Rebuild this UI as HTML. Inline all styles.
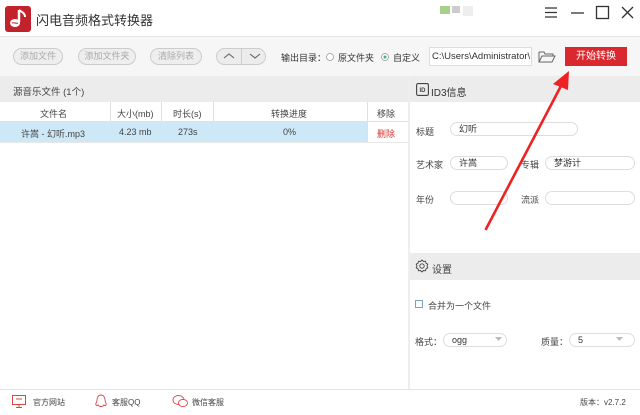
<!DOCTYPE html>
<html><head><meta charset="utf-8">
<style>
*{margin:0;padding:0;box-sizing:border-box}
body{width:640px;height:415px;overflow:hidden;background:#fff;font-family:"Liberation Sans","Noto Sans CJK SC",sans-serif;font-size:9px;color:#333;position:relative}
.a{position:absolute}
.btn{position:absolute;top:48px;height:17px;border:1px solid #ccc;border-radius:9px;background:#eee;color:#aaa;font-size:9px;line-height:15px;text-align:center}
.inp{position:absolute;height:14px;border:1px solid #ddd;border-radius:7px;background:#fff;font-size:9px;line-height:12px;padding-left:8px}
.lbl{position:absolute;font-size:9px;color:#444}
</style></head><body>
<!-- title bar -->
<div class="a" style="left:0;top:0;width:640px;height:37px;background:#fff;border-bottom:1px solid #e5e5e5"></div>
<svg class="a" style="left:5px;top:6px" width="26" height="26" viewBox="0 0 26 26">
<rect width="26" height="26" rx="3" fill="#c1222c"/>
<path d="M14 4v12" stroke="#fff" stroke-width="2.5"/>
<path d="M14 4c3 2 6 3 6 7" stroke="#fff" stroke-width="2" fill="none"/>
<ellipse cx="10" cy="17" rx="5" ry="4" fill="#fff"/>
<path d="M7 17c2-1 4 1 6 0" stroke="#c1222c" stroke-width="1" fill="none"/>
</svg>
<div class="a" style="left:36px;top:10px;font-size:13px;color:#333">闪电音频格式转换器</div>
<div class="a" style="left:440px;top:6px;width:10px;height:8px;background:#a8d08a"></div>
<div class="a" style="left:452px;top:6px;width:8px;height:7px;background:#ccc"></div>
<div class="a" style="left:463px;top:6px;width:10px;height:10px;background:#eee"></div>
<svg class="a" style="left:543px;top:5px" width="95" height="16">
<path d="M2 3h12M2 7.5h12M2 12h12" stroke="#333" stroke-width="1.3"/>
<path d="M28 8h13" stroke="#333" stroke-width="1.3"/>
<rect x="53.5" y="1.5" width="12" height="12" fill="none" stroke="#333" stroke-width="1.3"/>
<path d="M79 2l11 11M90 2l-11 11" stroke="#333" stroke-width="1.3"/>
</svg>
<!-- toolbar -->
<div class="a" style="left:0;top:37px;width:640px;height:39px;background:#f6f6f6"></div>
<div class="btn" style="left:13px;width:50px">添加文件</div>
<div class="btn" style="left:78px;width:58px">添加文件夹</div>
<div class="btn" style="left:150px;width:52px">清除列表</div>
<div class="btn" style="left:216px;width:50px;background:#ececec"></div>
<div class="a" style="left:241px;top:49px;width:1px;height:15px;background:#ccc"></div>
<svg class="a" style="left:222px;top:51px" width="40" height="10"><path d="M2 7l5-4 5 4M28 3l5 4 5-4" stroke="#666" stroke-width="1.1" fill="none"/></svg>
<div class="lbl" style="left:281px;top:51px;color:#333">输出目录：</div>
<svg class="a" style="left:326px;top:53px" width="70" height="10"><circle cx="4" cy="4" r="3.5" fill="#fff" stroke="#999" stroke-width="0.8"/><circle cx="59" cy="4" r="3.5" fill="#fff" stroke="#999" stroke-width="0.8"/><circle cx="59" cy="4" r="1.5" fill="#4a9"/></svg>
<div class="lbl" style="left:338px;top:51px;color:#333">原文件夹</div>
<div class="lbl" style="left:393px;top:51px;color:#333">自定义</div>
<div class="a" style="left:429px;top:47px;width:103px;height:19px;background:#fff;border:1px solid #ddd;font-size:9.5px;line-height:17px;padding-left:2px;overflow:hidden;white-space:nowrap">C:\Users\Administrator\</div>
<svg class="a" style="left:538px;top:50px" width="18" height="13"><path d="M1 2h5l1 2h8v2M1 2v10h13l3-6H4l-3 6" stroke="#666" stroke-width="1" fill="none"/></svg>
<div class="a" style="left:565px;top:47px;width:62px;height:19px;background:#d9282e;color:#fff;font-size:10px;line-height:19px;text-align:center">开始转换</div>
<!-- left panel -->
<div class="a" style="left:0;top:76px;width:408px;height:26px;background:#ececec"></div>
<div class="lbl" style="left:13px;top:84px;font-size:9.5px">源音乐文件 (1个)</div>
<div class="a" style="left:0;top:102px;width:408px;height:20px;border-bottom:1px solid #e0e0e0"></div>
<div class="a" style="left:110px;top:102px;width:1px;height:40px;background:#e0e0e0"></div>
<div class="a" style="left:161px;top:102px;width:1px;height:40px;background:#e0e0e0"></div>
<div class="a" style="left:213px;top:102px;width:1px;height:40px;background:#e0e0e0"></div>
<div class="a" style="left:367px;top:102px;width:1px;height:40px;background:#e0e0e0"></div>
<div class="lbl" style="left:40px;top:107px">文件名</div>
<div class="lbl" style="left:117px;top:107px">大小(mb)</div>
<div class="lbl" style="left:173px;top:107px">时长(s)</div>
<div class="lbl" style="left:271px;top:107px">转换进度</div>
<div class="lbl" style="left:377px;top:107px">移除</div>
<div class="a" style="left:0;top:122px;width:367px;height:20px;background:#cde8f7"></div>
<div class="lbl" style="left:21px;top:127px">许嵩 - 幻听.mp3</div>
<div class="lbl" style="left:119px;top:127px">4.23 mb</div>
<div class="lbl" style="left:178px;top:127px">273s</div>
<div class="lbl" style="left:283px;top:127px">0%</div>
<div class="lbl" style="left:377px;top:127px;color:#d33">删除</div>
<div class="a" style="left:0;top:142px;width:408px;height:1px;background:#e8e8e8"></div>
<div class="a" style="left:408px;top:76px;width:2px;height:313px;background:#eee"></div>
<!-- ID3 -->
<div class="a" style="left:410px;top:76px;width:230px;height:26px;background:#ececec"></div>
<svg class="a" style="left:416px;top:83px" width="13" height="13"><rect x="0.6" y="0.6" width="11.8" height="11.8" rx="1.5" fill="none" stroke="#444" stroke-width="1.1"/><text x="6.5" y="9" font-size="6" text-anchor="middle" font-family="Liberation Sans" font-weight="bold" fill="#444">ID</text></svg>
<div class="lbl" style="left:431px;top:84px;font-size:10px;color:#333">ID3信息</div>
<div class="lbl" style="left:416px;top:125px">标题</div>
<div class="inp" style="left:450px;top:122px;width:128px">幻听</div>
<div class="lbl" style="left:416px;top:158px">艺术家</div>
<div class="inp" style="left:450px;top:156px;width:58px">许嵩</div>
<div class="lbl" style="left:521px;top:158px">专辑</div>
<div class="inp" style="left:545px;top:156px;width:90px">梦游计</div>
<div class="lbl" style="left:416px;top:193px">年份</div>
<div class="inp" style="left:450px;top:191px;width:58px"></div>
<div class="lbl" style="left:521px;top:193px">流派</div>
<div class="inp" style="left:545px;top:191px;width:90px"></div>
<!-- settings -->
<div class="a" style="left:410px;top:253px;width:230px;height:27px;background:#ececec"></div>
<svg class="a" style="left:415px;top:259px" width="14" height="14" viewBox="0 0 14 14"><path d="M7 1l1.5 1.5 2-.3.5 2 1.8 1L12 7l.8 1.8-1.8 1-.5 2-2-.3L7 13l-1.5-1.5-2 .3-.5-2-1.8-1L2 7l-.8-1.8 1.8-1 .5-2 2 .3z" fill="none" stroke="#444" stroke-width="0.9"/><circle cx="7" cy="7" r="2.2" fill="none" stroke="#444" stroke-width="0.9"/></svg>
<div class="lbl" style="left:432px;top:261px;font-size:10px">设置</div>
<div class="a" style="left:415px;top:300px;width:8px;height:8px;border:1px solid #7aa4c4;background:#fff"></div>
<div class="lbl" style="left:428px;top:299px">合并为一个文件</div>
<div class="lbl" style="left:415px;top:335px">格式：</div>
<div class="inp" style="left:443px;top:333px;width:64px">ogg</div>
<div class="lbl" style="left:541px;top:335px">质量：</div>
<div class="inp" style="left:569px;top:333px;width:66px">5</div>
<svg class="a" style="left:495px;top:337px" width="130" height="6"><path d="M0 0h7l-3.5 4z" fill="#bbb"/><path d="M121 0h7l-3.5 4z" fill="#bbb"/></svg>
<!-- footer -->
<div class="a" style="left:0;top:389px;width:640px;height:1px;background:#e3e3e3"></div>
<svg class="a" style="left:12px;top:395px" width="14" height="13"><rect x="0.5" y="0.5" width="13" height="9" fill="none" stroke="#d44" stroke-width="1"/><path d="M4 4h6M7 10v2M4 12.5h6" stroke="#d44" stroke-width="1"/></svg>
<div class="lbl" style="left:33px;top:397px;font-size:8px">官方网站</div>
<svg class="a" style="left:95px;top:394px" width="12" height="14"><path d="M6 1c-3 0-4 3-4 5 0 2-2 4-1 5 1 1 2 0 2 0 1 2 5 2 6 0 0 0 1 1 2 0s-1-3-1-5c0-2-1-5-4-5z" fill="none" stroke="#d44" stroke-width="0.9"/></svg>
<div class="lbl" style="left:112px;top:397px;font-size:8px">客服QQ</div>
<svg class="a" style="left:172px;top:394px" width="17" height="14"><ellipse cx="6.5" cy="6" rx="5.5" ry="4.5" fill="none" stroke="#d44" stroke-width="0.9"/><ellipse cx="11" cy="9" rx="4.5" ry="3.6" fill="#fff" stroke="#d44" stroke-width="0.9"/></svg>
<div class="lbl" style="left:192px;top:397px;font-size:8px">微信客服</div>
<div class="lbl" style="left:580px;top:397px;font-size:8px">版本：v2.7.2</div>
<!-- arrow -->
<svg class="a" style="left:0;top:0" width="640" height="415">
<path d="M486 229L562 84" stroke="#e22" stroke-width="2.6" stroke-linecap="round"/>
<path d="M569 71L553 84L568 90z" fill="#e22"/>
</svg>
</body></html>
